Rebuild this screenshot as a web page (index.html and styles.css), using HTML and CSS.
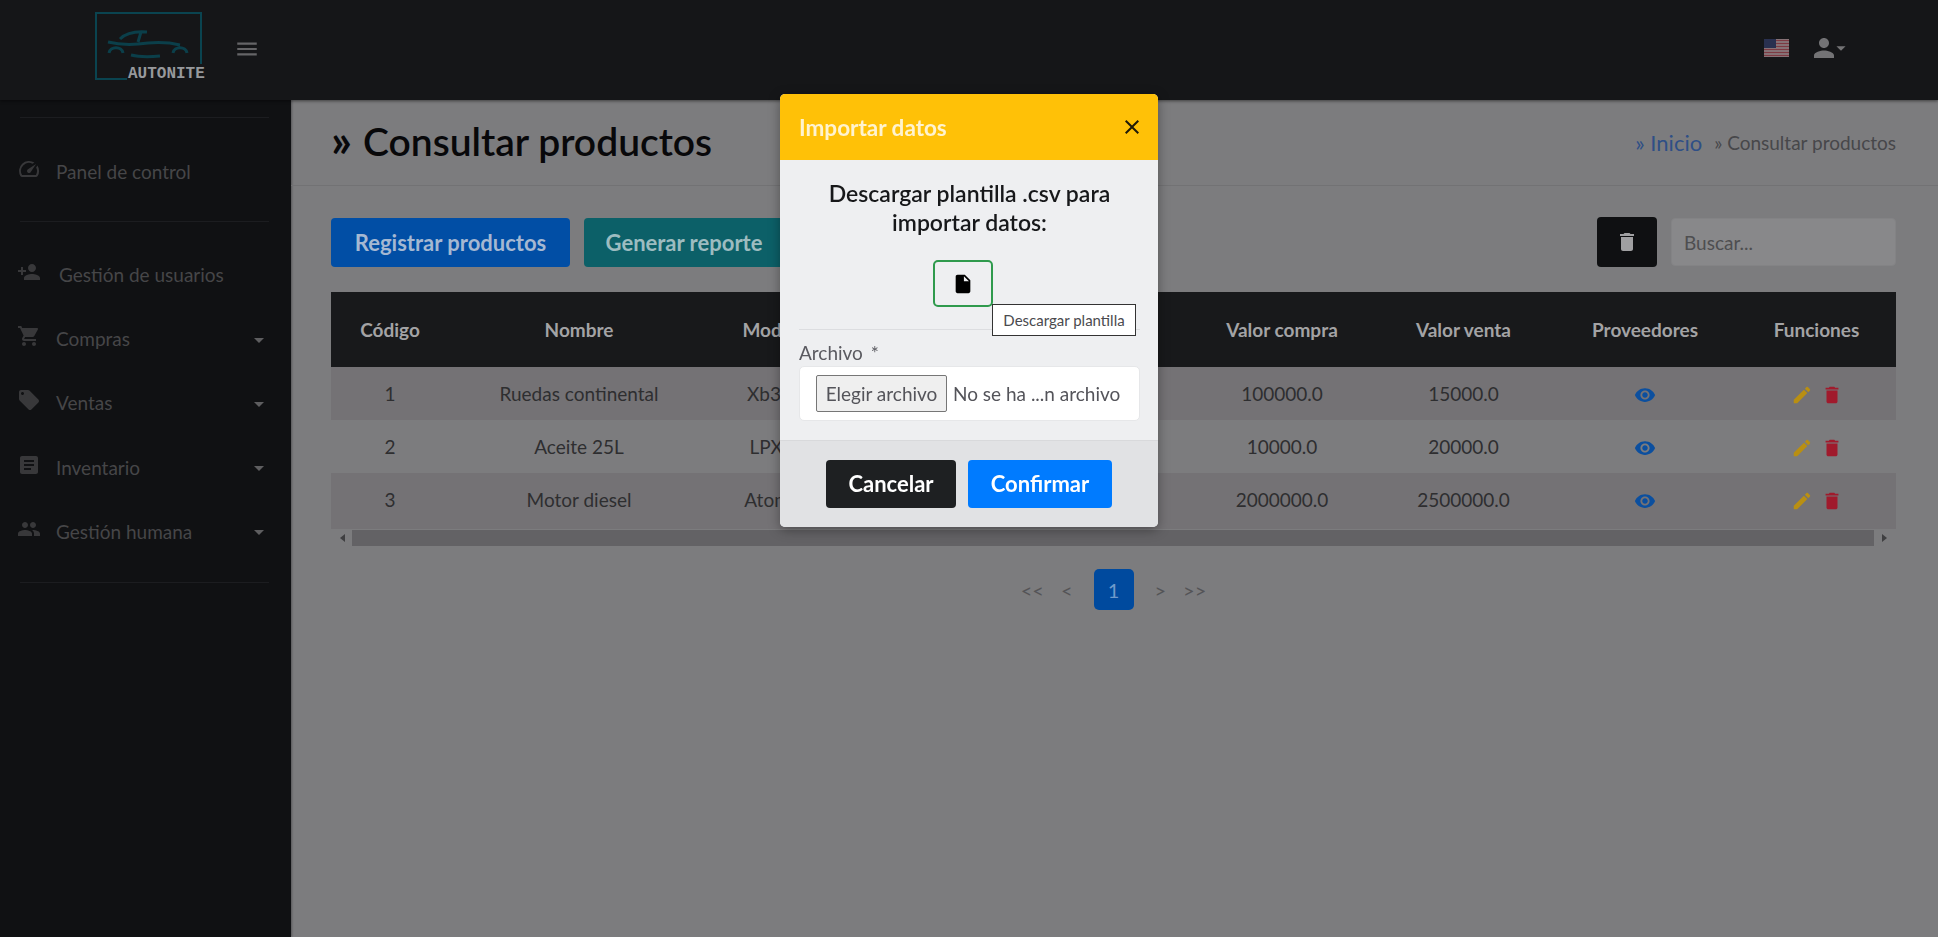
FILE: index.html
```html
<!DOCTYPE html>
<html lang="es">
<head>
    <meta charset="UTF-8">
    <title>Consultar productos</title>
    <link rel="stylesheet" href="styles.css">
</head>
<body>
    <svg class="icon-defs" xmlns="http://www.w3.org/2000/svg">
        <symbol id="i-speed" viewBox="0 0 24 24"><path d="M20.38 8.57l-1.23 1.85a8 8 0 0 1-.22 7.58H5.07A8 8 0 0 1 15.58 6.85l1.85-1.23A10 10 0 0 0 3.35 19a2 2 0 0 0 1.72 1h13.85a2 2 0 0 0 1.74-1 10 10 0 0 0-.27-10.44z"/><path d="M10.59 15.41a2 2 0 0 0 2.83 0l5.66-8.49-8.49 5.66a2 2 0 0 0 0 2.83z"/></symbol>
        <symbol id="i-person-add" viewBox="0 0 24 24"><path d="M15 12c2.21 0 4-1.79 4-4s-1.79-4-4-4-4 1.79-4 4 1.79 4 4 4zm-9-2V7H4v3H1v2h3v3h2v-3h3v-2H6zm9 4c-2.67 0-8 1.34-8 4v2h16v-2c0-2.66-5.33-4-8-4z"/></symbol>
        <symbol id="i-cart" viewBox="0 0 24 24"><path d="M7 18c-1.1 0-1.99.9-1.99 2S5.9 22 7 22s2-.9 2-2-.9-2-2-2zM1 2v2h2l3.6 7.59-1.35 2.45c-.16.28-.25.61-.25.96 0 1.1.9 2 2 2h12v-2H7.42c-.14 0-.25-.11-.25-.25l.03-.12.9-1.63h7.45c.75 0 1.41-.41 1.75-1.03l3.58-6.49c.08-.14.12-.31.12-.48 0-.55-.45-1-1-1H5.21l-.94-2H1zm16 16c-1.1 0-1.99.9-1.99 2s.89 2 1.99 2 2-.9 2-2-.9-2-2-2z"/></symbol>
        <symbol id="i-tag" viewBox="0 0 24 24"><path d="M21.41 11.58l-9-9C12.05 2.22 11.55 2 11 2H4c-1.1 0-2 .9-2 2v7c0 .55.22 1.05.59 1.42l9 9c.36.36.86.58 1.41.58.55 0 1.05-.22 1.41-.59l7-7c.37-.36.59-.86.59-1.41 0-.55-.23-1.06-.59-1.42zM5.5 7C4.67 7 4 6.33 4 5.5S4.67 4 5.5 4 7 4.67 7 5.5 6.33 7 5.5 7z"/></symbol>
        <symbol id="i-article" viewBox="0 0 24 24"><path d="M19 3H5c-1.1 0-2 .9-2 2v14c0 1.1.9 2 2 2h14c1.1 0 2-.9 2-2V5c0-1.1-.9-2-2-2zm-5 14H7v-2h7v2zm3-4H7v-2h10v2zm0-4H7V7h10v2z"/></symbol>
        <symbol id="i-people" viewBox="0 0 24 24"><path d="M16 11c1.66 0 2.99-1.34 2.99-3S17.66 5 16 5c-1.66 0-3 1.34-3 3s1.34 3 3 3zm-8 0c1.66 0 2.99-1.34 2.99-3S9.66 5 8 5C6.34 5 5 6.34 5 8s1.34 3 3 3zm0 2c-2.33 0-7 1.17-7 3.5V19h14v-2.5c0-2.33-4.67-3.5-7-3.5zm8 0c-.29 0-.62.02-.97.05 1.16.84 1.97 1.97 1.97 3.45V19h6v-2.5c0-2.33-4.67-3.5-7-3.5z"/></symbol>
        <symbol id="i-person" viewBox="0 0 24 24"><path d="M12 12c2.21 0 4-1.79 4-4s-1.79-4-4-4-4 1.79-4 4 1.79 4 4 4zm0 2c-2.67 0-8 1.34-8 4v2h16v-2c0-2.66-5.33-4-8-4z"/></symbol>
        <symbol id="i-delete" viewBox="0 0 24 24"><path d="M6 19c0 1.1.9 2 2 2h8c1.1 0 2-.9 2-2V7H6v12zM19 4h-3.5l-1-1h-5l-1 1H5v2h14V4z"/></symbol>
        <symbol id="i-edit" viewBox="0 0 24 24"><path d="M3 17.25V21h3.75L17.81 9.94l-3.75-3.75L3 17.25zM20.71 7.04c.39-.39.39-1.02 0-1.41l-2.34-2.34c-.39-.39-1.02-.39-1.41 0l-1.83 1.83 3.75 3.75 1.83-1.83z"/></symbol>
        <symbol id="i-eye" viewBox="0 0 24 24"><path d="M12 4.5C7 4.5 2.73 7.61 1 12c1.73 4.39 6 7.5 11 7.5s9.27-3.11 11-7.5c-1.73-4.39-6-7.5-11-7.5zM12 17c-2.76 0-5-2.24-5-5s2.24-5 5-5 5 2.24 5 5-2.24 5-5 5zm0-8c-1.66 0-3 1.34-3 3s1.34 3 3 3 3-1.34 3-3-1.34-3-3-3z"/></symbol>
        <symbol id="i-file" viewBox="0 0 24 24"><path d="M6 2c-1.1 0-1.99.9-1.99 2L4 20c0 1.1.89 2 1.99 2H18c1.1 0 2-.9 2-2V8l-6-6H6zm7 7V3.5L18.5 9H13z"/></symbol>
        <symbol id="i-menu" viewBox="0 0 24 24"><path d="M3 18h18v-2H3v2zm0-5h18v-2H3v2zm0-7v2h18V6H3z"/></symbol>
        <symbol id="i-close" viewBox="0 0 24 24"><path d="M19 6.41L17.59 5 12 10.59 6.41 5 5 6.41 10.59 12 5 17.59 6.41 19 12 13.41 17.59 19 19 17.59 13.41 12z"/></symbol>
        <symbol id="i-caret" viewBox="0 0 24 24"><path d="M7 10l5 5 5-5z"/></symbol>
    </svg>

    <header class="topbar">
        <a class="logo">
            <svg class="logo-art" viewBox="0 0 110 70">
                <path class="logo-frame" d="M32 67H1V1H106V52"/>
                <path class="logo-car" d="M13 30c12 3 26 3 40 1 12-1 24 0 32 2M25 27c5-5 14-8 27-7M46 20l-3 10M14 41c1-7 13-7 14 0M78 41c1-7 13-7 14 0M36 43c8 2 18 2 29 1"/>
            </svg>
            <span class="logo-name">AUTONITE</span>
        </a>
        <svg class="menu-toggle"><use href="#i-menu"/></svg>
        <div class="topbar-right">
            <svg class="flag" viewBox="0 0 25 18">
                <rect width="25" height="18" fill="#8a8587"/>
                <path d="M0 1.5h25M0 4.5h25M0 7.5h25M0 10.5h25M0 13.5h25M0 16.5h25" stroke="#7d3a42" stroke-width="1.4"/>
                <rect width="12" height="9" fill="#29304f"/>
            </svg>
            <div class="user-menu">
                <svg class="user-icon"><use href="#i-person"/></svg>
                <svg class="user-caret"><use href="#i-caret"/></svg>
            </div>
        </div>
    </header>

    <div class="layout">
        <aside class="sidebar">
            <hr class="side-rule first">
            <a class="side-item"><svg><use href="#i-speed"/></svg><span>Panel de control</span></a>
            <hr class="side-rule">
            <a class="side-item wide"><svg><use href="#i-person-add"/></svg><span>Gestión de usuarios</span></a>
            <a class="side-item"><svg><use href="#i-cart"/></svg><span>Compras</span><svg class="side-caret"><use href="#i-caret"/></svg></a>
            <a class="side-item"><svg><use href="#i-tag"/></svg><span>Ventas</span><svg class="side-caret"><use href="#i-caret"/></svg></a>
            <a class="side-item"><svg><use href="#i-article"/></svg><span>Inventario</span><svg class="side-caret"><use href="#i-caret"/></svg></a>
            <a class="side-item"><svg><use href="#i-people"/></svg><span>Gestión humana</span><svg class="side-caret"><use href="#i-caret"/></svg></a>
            <hr class="side-rule">
        </aside>

        <main class="content">
            <div class="page-head">
                <h1><span class="title-mark">»</span>Consultar productos</h1>
                <nav class="crumbs">
                    <a>» Inicio</a>
                    <span>» Consultar productos</span>
                </nav>
            </div>

            <div class="toolbar">
                <button class="btn btn-blue">Registrar productos</button>
                <button class="btn btn-teal">Generar reporte</button>
                <button class="btn-trash"><svg><use href="#i-delete"/></svg></button>
                <input class="search" type="text" placeholder="Buscar...">
            </div>

            <table class="products">
                <colgroup>
                    <col class="c-code"><col class="c-name"><col class="c-model"><col class="c-hidden">
                    <col class="c-buy"><col class="c-sell"><col class="c-prov"><col class="c-func">
                </colgroup>
                <thead>
                    <tr>
                        <th>Código</th><th>Nombre</th><th>Modelo</th><th></th>
                        <th>Valor compra</th><th>Valor venta</th><th>Proveedores</th><th>Funciones</th>
                    </tr>
                </thead>
                <tbody>
                    <tr>
                        <td>1</td><td>Ruedas continental</td><td>Xb300</td><td></td>
                        <td>100000.0</td><td>15000.0</td>
                        <td><svg class="ico-eye"><use href="#i-eye"/></svg></td>
                        <td><svg class="ico-edit"><use href="#i-edit"/></svg><svg class="ico-del"><use href="#i-delete"/></svg></td>
                    </tr>
                    <tr>
                        <td>2</td><td>Aceite 25L</td><td>LPX-2</td><td></td>
                        <td>10000.0</td><td>20000.0</td>
                        <td><svg class="ico-eye"><use href="#i-eye"/></svg></td>
                        <td><svg class="ico-edit"><use href="#i-edit"/></svg><svg class="ico-del"><use href="#i-delete"/></svg></td>
                    </tr>
                    <tr>
                        <td>3</td><td>Motor diesel</td><td>Atom 3</td><td></td>
                        <td>2000000.0</td><td>2500000.0</td>
                        <td><svg class="ico-eye"><use href="#i-eye"/></svg></td>
                        <td><svg class="ico-edit"><use href="#i-edit"/></svg><svg class="ico-del"><use href="#i-delete"/></svg></td>
                    </tr>
                </tbody>
            </table>

            <div class="hscroll">
                <span class="arrow-left"></span>
                <div class="thumb"></div>
                <span class="arrow-right"></span>
            </div>

            <div class="pager">
                <a>&lt;&lt;</a>
                <a>&lt;</a>
                <a class="current">1</a>
                <a>&gt;</a>
                <a>&gt;&gt;</a>
            </div>
        </main>
    </div>

    <!-- Modal importar datos -->
    <div class="modal-layer">
        <div class="modal">
            <div class="modal-header">
                <h2>Importar datos</h2>
                <svg class="modal-close"><use href="#i-close"/></svg>
            </div>
            <div class="modal-body">
                <p class="modal-lead">Descargar plantilla .csv para importar datos:</p>
                <button class="btn-template"><svg><use href="#i-file"/></svg></button>
                <hr class="modal-rule">
                <label class="file-label">Archivo <span class="required">*</span></label>
                <div class="file-box">
                    <span class="file-button">Elegir archivo</span>
                    <span class="file-name">No se ha ...n archivo</span>
                </div>
            </div>
            <div class="modal-footer">
                <button class="btn btn-cancel">Cancelar</button>
                <button class="btn btn-confirm">Confirmar</button>
            </div>
            <div class="tooltip">Descargar plantilla</div>
        </div>
    </div>
</body>
</html>
```

FILE: styles.css
```css
* {
    margin: 0;
    padding: 0;
    box-sizing: border-box;
}

html, body {
    height: 100%;
    overflow: hidden;
}

body {
    background: #7c7c7e;
    color: #2e2e30;
    font-family: Lato, "Open Sans", sans-serif;
    display: flex;
    flex-direction: column;
}

.icon-defs {
    display: none;
}

svg {
    fill: currentColor;
}

/* Topbar */
.topbar {
    height: 100px;
    flex: none;
    background: #151618;
    display: flex;
    align-items: center;
    padding-left: 95px;
    box-shadow: 0 1px 3px rgba(0,0,0,0.5);
    position: relative;
    z-index: 2;
}

.logo {
    position: relative;
    width: 110px;
    height: 70px;
    margin-top: -6px;
}

.logo-art {
    display: block;
    width: 110px;
    height: 70px;
    fill: none;
}

.logo-frame {
    stroke: #0a4450;
    stroke-width: 2;
}

.logo-car {
    stroke: #0b3f4a;
    stroke-width: 3;
}

.logo-name {
    position: absolute;
    left: 33px;
    bottom: -1px;
    font-family: "Liberation Mono", monospace;
    font-size: 16px;
    font-weight: 700;
    color: #97999c;
}

.menu-toggle {
    width: 26px;
    height: 26px;
    color: #656567;
    margin-left: 29px;
    margin-top: -3px;
}

.topbar-right {
    margin-left: auto;
    margin-right: 86px;
    margin-top: -4px;
    display: flex;
    align-items: center;
    gap: 20px;
}

.flag {
    width: 25px;
    height: 18px;
}

.user-menu {
    display: flex;
    align-items: center;
    color: #737375;
}

.user-icon {
    width: 30px;
    height: 30px;
}

.user-caret {
    width: 22px;
    height: 22px;
    margin-left: -9px;
}

/* Layout */
.layout {
    flex: 1;
    display: flex;
    min-height: 0;
}

.sidebar {
    width: 291px;
    flex: none;
    background: #101113;
    color: #464648;
    font-size: 19px;
    padding-top: 17px;
    box-shadow: 1px 0 2px rgba(0,0,0,0.3);
}

.side-rule {
    border: none;
    border-top: 1px solid #1c1d20;
    margin: 18px 22px 20px 20px;
}

.side-rule.first {
    margin-top: 0;
    margin-bottom: 21px;
}

.side-item {
    height: 64.25px;
    display: flex;
    align-items: center;
    gap: 15px;
    padding: 0 20px 0 17px;
}

.side-item.wide {
    gap: 18px;
}

.side-item svg {
    width: 24px;
    height: 24px;
    flex: none;
    margin-top: -5px;
    color: #38383a;
}

.side-item .side-caret {
    margin-left: auto;
    color: #5e5e60;
    margin-top: 2px;
}

/* Content */
.content {
    flex: 1;
    padding: 0 42px 0 40px;
    min-width: 0;
}

.page-head {
    height: 86px;
    margin: 0 -42px 0 -40px;
    padding: 0 42px 0 40px;
    border-bottom: 1px solid #727274;
    display: flex;
    align-items: center;
    justify-content: space-between;
}

.page-head h1 {
    font-size: 39px;
    font-weight: 600;
    line-height: 1;
    margin-top: -2px;
    color: #08080a;
    display: flex;
    align-items: center;
}

.title-mark {
    width: 32px;
    font-size: 46px;
    font-weight: 700;
    line-height: 1;
    margin-top: -4px;
}

.crumbs {
    font-size: 19px;
    display: flex;
    align-items: center;
    gap: 12px;
    color: #47474a;
}

.crumbs a {
    font-size: 22px;
    color: #2f4f86;
}

.toolbar {
    display: flex;
    align-items: center;
    gap: 14px;
    padding-top: 31px;
    margin-bottom: 25px;
}

.btn {
    height: 49px;
    border: none;
    border-radius: 4px;
    font-family: inherit;
    font-size: 22px;
    font-weight: 700;
}

.btn-blue {
    width: 239px;
    background: #014ea5;
    color: #a5b8d2;
}

.btn-teal {
    width: 200px;
    background: #0c6068;
    color: #9dbcc0;
}

.btn-trash {
    width: 60px;
    height: 50px;
    margin-left: auto;
    background: #0f1012;
    color: #a0a0a2;
    border: none;
    border-radius: 4px;
    display: flex;
    align-items: center;
    justify-content: center;
}

.btn-trash svg {
    width: 24px;
    height: 24px;
}

.search {
    width: 225px;
    height: 48px;
    background: #88888a;
    border: 1px solid #838385;
    border-radius: 4px;
    padding: 0 12px;
    font-family: inherit;
    font-size: 19px;
}

.search::placeholder {
    color: #4e4e50;
}

/* Table */
.products {
    width: 1565px;
    table-layout: fixed;
    border-collapse: collapse;
    text-align: center;
    font-size: 19px;
}

.c-code { width: 118px; }
.c-name { width: 260px; }
.c-model { width: 132px; }
.c-hidden { width: 349px; }
.c-buy { width: 184px; }
.c-sell { width: 179px; }
.c-prov { width: 184px; }
.c-func { width: 159px; }

.products th {
    height: 75px;
    background: #18191b;
    color: #a3a3a5;
    font-size: 19px;
    font-weight: 700;
}

.products td {
    height: 53px;
    color: #2e2e30;
}

.products tbody tr:nth-child(odd) td {
    background: #747275;
}

.products tbody tr:last-child td {
    height: 56px;
    padding-bottom: 4px;
}

.products td svg {
    width: 22px;
    height: 22px;
    vertical-align: middle;
    display: inline-block;
}

.ico-eye {
    color: #0b4f9f;
}

.ico-edit {
    color: #b98f12;
    margin-right: 8px;
}

.ico-del {
    color: #a01a2c;
}

.hscroll {
    width: 1565px;
    height: 18px;
    display: flex;
    align-items: center;
    padding: 0 9px 0 7px;
}

.thumb {
    flex: 1;
    height: 16px;
    background: #636265;
}

.arrow-left {
    border: 4px solid transparent;
    border-right: 5px solid #3f3f41;
    border-left: 0;
    margin-left: 2px;
    margin-right: 7px;
}

.arrow-right {
    border: 4px solid transparent;
    border-left: 5px solid #3f3f41;
    border-right: 0;
    margin-left: 8px;
}

/* Pagination */
.pager {
    width: 1565px;
    margin-top: 22px;
    display: flex;
    justify-content: center;
    align-items: center;
    gap: 17px;
    font-size: 20px;
    color: #545457;
}

.pager .current {
    width: 40px;
    height: 41px;
    background: #004a9e;
    color: #6f9acb;
    border-radius: 5px;
    display: flex;
    align-items: center;
    justify-content: center;
    margin: 0 4px;
}

/* Modal */
.modal-layer {
    position: fixed;
    inset: 0;
    display: flex;
    justify-content: center;
    align-items: flex-start;
    padding-top: 94px;
    z-index: 10;
}

.modal {
    position: relative;
    width: 378px;
    border-radius: 5px;
    box-shadow: 0 3px 12px rgba(0,0,0,0.35);
    background: #eeeff1;
}

.modal-header {
    height: 66px;
    background: #ffc107;
    border-radius: 5px 5px 0 0;
    display: flex;
    align-items: center;
    justify-content: space-between;
    padding: 0 14px 0 19px;
}

.modal-header h2 {
    font-size: 22.5px;
    font-weight: 700;
    color: #fff3cf;
}

.modal-close {
    width: 24px;
    height: 24px;
    color: #1f1a08;
}

.modal-body {
    padding: 19px 18px 19px 19px;
    color: #54545a;
}

.modal-lead {
    width: 320px;
    margin: 0 auto;
    font-size: 23px;
    font-weight: 600;
    line-height: 29px;
    text-align: center;
    color: #17181a;
}

.btn-template {
    display: flex;
    width: 60px;
    height: 47px;
    margin: 23px 0 0 134px;
    background: transparent;
    border: 2px solid #2f9a4d;
    border-radius: 5px;
    align-items: center;
    justify-content: center;
    color: #000;
}

.btn-template svg {
    width: 22px;
    height: 22px;
}

.modal-rule {
    border: none;
    border-top: 1px solid #dcdde0;
    margin-top: 22px;
}

.file-label {
    display: block;
    height: 36px;
    line-height: 24px;
    padding-top: 11px;
    font-size: 19px;
    color: #5a5a60;
}

.required {
    margin-left: 3px;
}

.file-box {
    height: 55px;
    background: #fff;
    border: 1px solid #e6e7e9;
    border-radius: 5px;
    display: flex;
    align-items: center;
    padding-left: 16px;
    font-size: 19px;
    color: #54545a;
    gap: 6px;
}

.file-button {
    width: 131px;
    height: 37px;
    line-height: 35px;
    text-align: center;
    background: #efefef;
    border: 1px solid #767676;
    border-radius: 2px;
}

.modal-footer {
    height: 87px;
    padding-bottom: 1px;
    background: #e1e2e4;
    border-top: 1px solid #d8d9db;
    border-radius: 0 0 5px 5px;
    display: flex;
    justify-content: center;
    align-items: center;
    gap: 12px;
}

.btn-cancel {
    width: 130px;
    height: 48px;
    background: #1e2022;
    color: #fff;
}

.btn-confirm {
    width: 144px;
    height: 48px;
    background: #007bff;
    color: #fff;
}

.tooltip {
    position: absolute;
    left: 212px;
    top: 210px;
    width: 144px;
    height: 32px;
    line-height: 30px;
    background: #fff;
    border: 1px solid #333;
    text-align: center;
    font-size: 15px;
    color: #4a4a4e;
}
```
